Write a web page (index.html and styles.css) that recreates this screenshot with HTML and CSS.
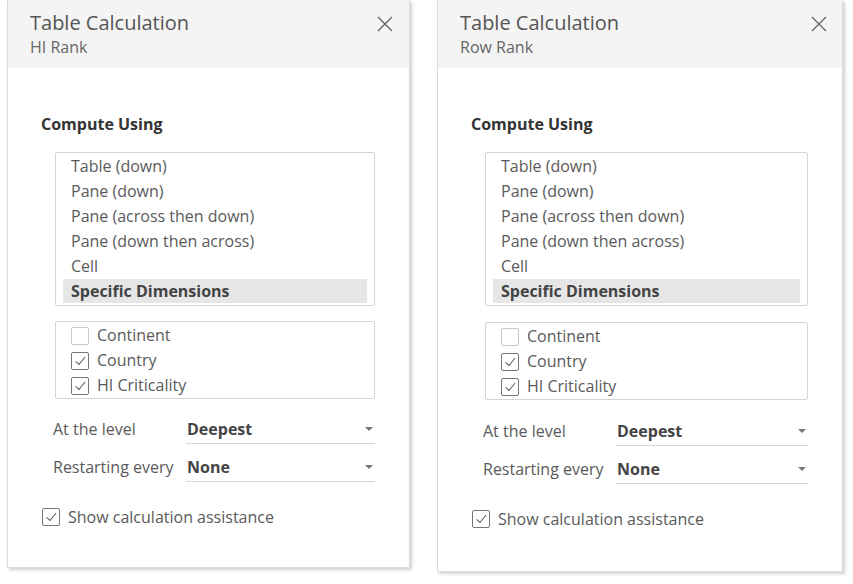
FILE: index.html
```html
<!DOCTYPE html>
<html lang="en">
  <head>
    <meta charset="UTF-8" />
    <meta name="viewport" content="width=device-width, initial-scale=1.0" />
    <title>Table Calculation</title>
    <link rel="stylesheet" href="styles.css">
  </head>
  <body>
    <div class="dialogs">
      <section class="dialog">
        <header class="dialog-head">
          <div>
            <h2>Table Calculation</h2>
            <p class="field-name">HI Rank</p>
          </div>
          <button class="close" aria-label="Close">
            <svg width="16" height="16" viewBox="0 0 16 16"><path d="M1 1 L15 15 M15 1 L1 15" stroke="#666" stroke-width="1.4" fill="none"/></svg>
          </button>
        </header>
        <div class="dialog-body">
          <h3>Compute Using</h3>
          <ul class="list-box">
            <li>Table (down)</li>
            <li>Pane (down)</li>
            <li>Pane (across then down)</li>
            <li>Pane (down then across)</li>
            <li>Cell</li>
            <li class="selected">Specific Dimensions</li>
          </ul>
          <ul class="list-box dims">
            <li><span class="check"></span>Continent</li>
            <li><span class="check on"></span>Country</li>
            <li><span class="check on"></span>HI Criticality</li>
          </ul>
          <div class="option">
            <span class="option-label">At the level</span>
            <div class="dropdown">Deepest<span class="caret"></span></div>
          </div>
          <div class="option">
            <span class="option-label">Restarting every</span>
            <div class="dropdown">None<span class="caret"></span></div>
          </div>
          <label class="assist"><span class="check on"></span>Show calculation assistance</label>
        </div>
      </section>

      <section class="dialog second">
        <header class="dialog-head">
          <div>
            <h2>Table Calculation</h2>
            <p class="field-name">Row Rank</p>
          </div>
          <button class="close" aria-label="Close">
            <svg width="16" height="16" viewBox="0 0 16 16"><path d="M1 1 L15 15 M15 1 L1 15" stroke="#666" stroke-width="1.4" fill="none"/></svg>
          </button>
        </header>
        <div class="dialog-body">
          <h3>Compute Using</h3>
          <ul class="list-box">
            <li>Table (down)</li>
            <li>Pane (down)</li>
            <li>Pane (across then down)</li>
            <li>Pane (down then across)</li>
            <li>Cell</li>
            <li class="selected">Specific Dimensions</li>
          </ul>
          <ul class="list-box dims">
            <li><span class="check"></span>Continent</li>
            <li><span class="check on"></span>Country</li>
            <li><span class="check on"></span>HI Criticality</li>
          </ul>
          <div class="option">
            <span class="option-label">At the level</span>
            <div class="dropdown">Deepest<span class="caret"></span></div>
          </div>
          <div class="option">
            <span class="option-label">Restarting every</span>
            <div class="dropdown">None<span class="caret"></span></div>
          </div>
          <label class="assist"><span class="check on"></span>Show calculation assistance</label>
        </div>
      </section>
      <div class="edge"></div>
    </div>
  </body>
</html>
```

FILE: styles.css
```css
body {
  margin: 0;
  background: #fff;
  font-family: "Open Sans", "Liberation Sans", sans-serif;
  color: #5a5a5a;
}

.dialogs {
  display: flex;
  align-items: flex-start;
  height: 584px;
  padding-left: 7px;
  gap: 27px;
}

.dialog {
  flex: none;
  width: 403px;
  height: 568px;
  box-sizing: border-box;
  border: 1px solid #dcdcdc;
  border-top: none;
  background: #fff;
  box-shadow: 2px 2px 3px rgba(0, 0, 0, 0.18);
}
.dialog.second {
  width: 406px;
  height: 572px;
}

.dialog-head {
  display: flex;
  justify-content: space-between;
  align-items: flex-start;
  height: 68px;
  box-sizing: border-box;
  padding: 10px 16px 0 22px;
  background: #f4f4f4;
}
.second .dialog-head {
  padding-right: 15px;
}
.dialog-head h2 {
  margin: 0;
  font-size: 20px;
  font-weight: 400;
  line-height: 26px;
  color: #555;
}
.field-name {
  margin: 0;
  font-size: 16px;
  line-height: 22px;
  color: #666;
}
.close {
  border: none;
  background: none;
  padding: 0;
  margin-top: 6px;
}

.dialog-body {
  padding: 45px 34px 0 33px;
}
.dialog-body h3 {
  margin: 0 0 17px;
  font-size: 16px;
  font-weight: 700;
  color: #333;
  line-height: 22px;
}

.list-box {
  list-style: none;
  margin: 0 0 15px 14px;
  padding: 1px 7px 2px 7px;
  border: 1px solid #d4d4d4;
  border-radius: 2px;
}
.list-box li {
  height: 25px;
  line-height: 25px;
  font-size: 16px;
  padding-left: 8px;
  color: #5a5a5a;
  display: flex;
  align-items: center;
}
.list-box li.selected {
  background: #e6e6e6;
  font-weight: 700;
  color: #444;
  height: 24px;
}
.dims {
  padding: 1px 7px 0 7px;
}
.second .list-box {
  margin-bottom: 16px;
}

.check {
  width: 18px;
  height: 18px;
  border: 1px solid #c8c8c8;
  border-radius: 2px;
  margin-right: 8px;
  box-sizing: border-box;
  flex: none;
  display: inline-flex;
  align-items: center;
  justify-content: center;
}
.check.on {
  border-color: #777;
}
.check.on::after {
  content: "";
  width: 4px;
  height: 9px;
  border: solid #555;
  border-width: 0 1.5px 1.5px 0;
  transform: rotate(40deg) translate(-1px, -1px);
}

.option {
  display: flex;
  align-items: center;
  height: 30px;
  margin: 0 0 8px 12px;
  font-size: 16px;
}
.option-label {
  width: 133px;
  color: #5a5a5a;
}
.dropdown {
  flex: 1;
  height: 30px;
  box-sizing: border-box;
  display: flex;
  justify-content: space-between;
  align-items: center;
  padding-left: 1px;
  border-bottom: 1px solid #d6d6d6;
  font-weight: 700;
  color: #444;
}
.caret {
  width: 0;
  height: 0;
  border-left: 4px solid transparent;
  border-right: 4px solid transparent;
  border-top: 4px solid #777;
  margin-right: 2px;
}

.assist {
  display: flex;
  align-items: center;
  margin-top: 23px;
  font-size: 16px;
  line-height: 24px;
  color: #5a5a5a;
  margin-left: 1px;
}

.edge {
  margin-left: auto;
  flex: none;
  width: 3px;
  height: 584px;
  background: #111;
}
```
